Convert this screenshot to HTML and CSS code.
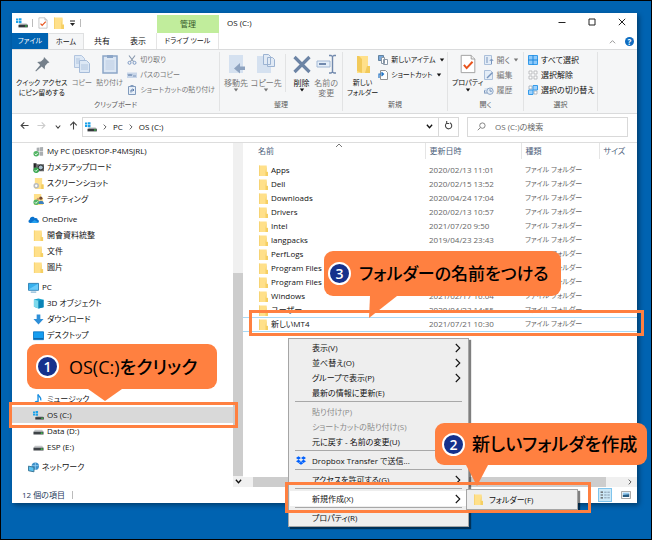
FILE: index.html
```html
<!DOCTYPE html>
<html lang="ja">
<head>
    <meta charset="utf-8">
    <title>OS (C:)</title>
    <link rel="stylesheet" href="styles.css">
</head>
<body>
    <svg class="defs" aria-hidden="true">
        <symbol id="folder" viewBox="0 0 10 12">
            <path d="M0 0.5h8.5v7H10V12H0z" fill="#ffe08a"/>
            <path d="M8.3 0.5v7.3H10V12H7.2V7.8z" fill="#f5cf63"/>
            <path d="M0 0.5h1V12H0z" fill="#f7d372"/>
        </symbol>
        <symbol id="drive" viewBox="0 0 12 8">
            <path d="M2 2h8l1.5 2.5h-11z" fill="#c4c6c8"/>
            <path d="M0.5 4.3h11v3h-11z" fill="#3f4347"/>
            <path d="M8.5 5.2h2v1.2h-2z" fill="#3fe04f"/>
        </symbol>
        <symbol id="osdrive" viewBox="0 0 12 10">
            <path d="M0 0.5h2.2v2H0zM2.8 0.2h2.7v2.3H2.8zM0 3h2.2v2H0zM2.8 3h2.7v2.3H2.8z" fill="#1ba1e9"/>
            <path d="M4 5.5h6.5L11.8 7H3z" fill="#b5b8ba"/>
            <path d="M2.5 6.8h9.3v2.6H2.5z" fill="#34383c"/>
            <path d="M9 7.5h2v1H9z" fill="#3fe04f"/>
        </symbol>
        <symbol id="right" viewBox="0 0 6 10">
            <path d="M0.8 1l4 4-4 4" fill="none" stroke="currentColor" stroke-width="1.1"/>
        </symbol>
        <symbol id="down" viewBox="0 0 8 6">
            <path d="M1 1l3 3.4L7 1" fill="none" stroke="currentColor" stroke-width="1.5"/>
        </symbol>
        <symbol id="caret" viewBox="0 0 6 4">
            <path d="M0.8 0.5h4.4L3 3.5z" fill="currentColor"/>
        </symbol>
        <symbol id="back" viewBox="0 0 10 10">
            <path d="M9.5 5H1.2M4.8 1.4L1.2 5l3.6 3.6" fill="none" stroke="currentColor" stroke-width="1.2"/>
        </symbol>
        <symbol id="check-page" viewBox="0 0 18 22">
            <path d="M1.5 1.5h11l4 4v15h-15z" fill="#fff" stroke="#9a9a9a"/>
            <path d="M12.5 1.5v4h4" fill="#eee" stroke="#9a9a9a"/>
            <path d="M4.5 12l3 3.5 6.5-7" fill="none" stroke="#e8541e" stroke-width="2.2"/>
        </symbol>
    </svg>

    <main class="window">
        <header class="titlebar">
            <div class="quick-access">
                <svg class="i12" viewBox="0 0 12 10"><use href="#osdrive"/></svg>
                <span class="bar"></span>
                <svg class="i12" viewBox="0 0 18 22"><use href="#check-page"/></svg>
                <svg class="i12"><use href="#folder"/></svg>
                <svg class="i7" viewBox="0 0 7 7"><path d="M1 1h5" stroke="#222"/><path d="M1 3h5L3.5 6z" fill="#222"/></svg>
                <span class="bar"></span>
            </div>
            <div class="context-label">管理</div>
            <div class="title">OS (C:)</div>
            <div class="window-buttons">
                <button aria-label="最小化"><svg viewBox="0 0 8 8"><path d="M0.5 4.5h7" stroke="#222"/></svg></button>
                <button aria-label="最大化"><svg viewBox="0 0 8 8"><path d="M1 1h6v6H1z" fill="none" stroke="#222"/></svg></button>
                <button aria-label="閉じる"><svg viewBox="0 0 8 8"><path d="M0.8 0.8l6.4 6.4M7.2 0.8L0.8 7.2" stroke="#222"/></svg></button>
            </div>
        </header>

        <nav class="tabs">
            <button class="tab file">ファイル</button>
            <button class="tab active">ホーム</button>
            <button class="tab">共有</button>
            <button class="tab">表示</button>
            <button class="tab tool">ドライブ ツール</button>
            <span class="tabs-end">
                <svg class="i7 grey" viewBox="0 0 8 6"><path d="M1 5l3-3 3 3" fill="none" stroke="currentColor"/></svg>
                <button class="help" aria-label="ヘルプ">?</button>
            </span>
        </nav>

        <section class="ribbon">
            <div class="group clipboard">
                <div class="tools">
                    <button class="big pin">
                        <svg viewBox="0 0 20 20"><path d="M12 3l5.5 5.5-1.8 0.6-2.7 2.8-0.3 3.6-3-3L4 17.5l-0.6-0.7L8.2 11 5.2 8l3.7-0.4 2.7-2.7z" fill="#75808b"/></svg>
                        クイック アクセス<br>にピン留めする
                    </button>
                    <button class="big off">
                        <svg viewBox="0 0 20 20"><path d="M2.500 1.500h7l3 3v9h-10z" fill="#dde8f5" stroke="#b2c5df"/><path d="M7.500 6.500h7l3 3v9h-10z" fill="#dde8f5" stroke="#a6bcd9"/><path d="M9 11h7M9 13h7M9 15h7M4 5h4M4 7h3M4 9h3" stroke="#a6bcd9" stroke-width="0.800"/></svg>
                        コピー
                    </button>
                    <button class="big off">
                        <svg viewBox="0 0 20 20"><path d="M3 2h14v17H3z" fill="#dce7f4" stroke="#8ca6c8" stroke-width="1.500"/><path d="M7 1h6v3H7z" fill="#8ca6c8"/><path d="M5.500 7h9M5.500 9h9M5.500 11h9M5.500 13h9M5.500 15h9" stroke="#b4c7df" stroke-width="0.800"/></svg>
                        貼り付け
                    </button>
                    <div class="stack">
                        <button class="small off"><svg viewBox="0 0 10 10"><path d="M2 0.500l4.500 6M8 0.500L3.500 6.500" stroke="#8798ad" stroke-width="1.100"/><circle cx="2.500" cy="7.800" r="1.500" fill="none" stroke="#7d9ac4"/><circle cx="7.500" cy="7.800" r="1.500" fill="none" stroke="#7d9ac4"/></svg>切り取り</button>
                        <button class="small off"><svg viewBox="0 0 10 10"><path d="M0 2.500h10v5.500H0z" fill="#c8d6e9"/><path d="M1 4l1 2 1-2 1 2 1-2M6 6h3" fill="none" stroke="#6885ad" stroke-width="0.800"/></svg>パスのコピー</button>
                        <button class="small off"><svg viewBox="0 0 10 10"><path d="M1.500 1.500h7v8h-7z" fill="#e7eff8" stroke="#819bbd"/><path d="M3.500 0h3v2h-3z" fill="#819bbd"/><path d="M4 7.500V5h2.500M5.500 3.800L7 5 5.500 6.200" fill="none" stroke="#4b6d9f" stroke-width="0.900"/></svg>ショートカットの貼り付け</button>
                    </div>
                </div>
                <div class="caption">クリップボード</div>
            </div>
            <div class="group organize">
                <div class="tools">
                    <button class="big off">
                        <svg viewBox="0 0 20 20"><path d="M3 1h14v18H3z" fill="#d5e1f0"/><path d="M19 12.500h-5V9l-6 5.500 6 5V16h5z" fill="#8da2bf"/></svg>
                        移動先<svg class="caret"><use href="#caret"/></svg>
                    </button>
                    <button class="big off">
                        <svg viewBox="0 0 20 20"><path d="M1 2h14v17H1z" fill="#d5e1f0"/><path d="M7.500 0.500h5l2 2v8h-7zM11.500 3.500h5l2 2v7h-7z" fill="#e1eaf5" stroke="#9cb3d2"/></svg>
                        コピー先<svg class="caret"><use href="#caret"/></svg>
                    </button>
                    <button class="big divided">
                        <svg viewBox="0 0 20 20"><path d="M2.500 3L17.500 18M17.500 3L2.500 18" stroke="#6c84a5" stroke-width="3.200"/></svg>
                        削除<svg class="caret"><use href="#caret"/></svg>
                    </button>
                    <button class="big off">
                        <svg viewBox="0 0 20 20"><path d="M1 7h13v6H1z" fill="#e5eef8" stroke="#a2b8d5"/><path d="M3 9h7v2H3z" fill="#7189ad"/><path d="M13 1.500h2l1.500 1 1.500-1h2M13 19h2l1.500-1L18 19h2M16.500 2v16" fill="none" stroke="#7189ad" stroke-width="1.400"/></svg>
                        名前の<br>変更
                    </button>
                </div>
                <div class="caption">整理</div>
            </div>
            <div class="group new">
                <div class="tools">
                    <button class="big">
                        <svg viewBox="0 0 20 20"><path d="M4 2h11v10h2v7H4z" fill="#ffe08a"/><path d="M4 2h2l3 3v14l-5-2zM14 12h3v7h-5z" fill="#f2ca5b"/></svg>
                        新しい<br>フォルダー
                    </button>
                    <div class="stack">
                        <button class="small"><svg viewBox="0 0 10 10"><path d="M0.500 0.500h5v5h-5z" fill="#78a9dc" stroke="#63829f"/><path d="M3.500 2.500h3v6h-3zM5.500 4.500h4v5h-4z" fill="#fff" stroke="#8a98a7"/></svg>新しいアイテム<svg class="caret"><use href="#caret"/></svg></button>
                        <button class="small"><svg viewBox="0 0 10 10"><path d="M2.500 0.500h5l2 2v7h-7z" fill="#fff" stroke="#929292"/><path d="M1 8V4h4M3.500 2.200L5.500 4 3.500 6" fill="none" stroke="#2475c5" stroke-width="1.200"/></svg>ショートカット<svg class="caret"><use href="#caret"/></svg></button>
                    </div>
                </div>
                <div class="caption">新規</div>
            </div>
            <div class="group open">
                <div class="tools">
                    <button class="big">
                        <svg viewBox="0 0 18 22"><use href="#check-page"/></svg>
                        プロパティ<svg class="caret"><use href="#caret"/></svg>
                    </button>
                    <div class="stack">
                        <button class="small off"><svg viewBox="0 0 10 10"><path d="M0.500 0.500h7v9h-7z" fill="#e4edf7" stroke="#acc0da"/><path d="M2 3h2M2 5h2M2 7h2" stroke="#7895bd"/><path d="M7.500 9V4M5.800 6l1.700-2 1.700 2" fill="none" stroke="#7895bd"/></svg>開く<svg class="caret"><use href="#caret"/></svg></button>
                        <button class="small off"><svg viewBox="0 0 10 10"><path d="M0.500 0.500h6l2 2v7h-8z" fill="#e4edf7" stroke="#acc0da"/><path d="M3 8l5.500-5.500" stroke="#7895bd" stroke-width="1.500"/></svg>編集</button>
                        <button class="small off"><svg viewBox="0 0 10 10"><path d="M0.500 3h6l2-2v6h-8z" fill="#dbe5f1"/><circle cx="6" cy="6.200" r="3.200" fill="#e4edf7" stroke="#8ca5c6"/><path d="M6 4.200v2h2M1 5L0 8h3" fill="none" stroke="#7895bd"/></svg>履歴</button>
                    </div>
                </div>
                <div class="caption">開く</div>
            </div>
            <div class="group select">
                <div class="tools">
                    <div class="stack">
                        <button class="small"><svg viewBox="0 0 10 10"><path d="M0.500 0.500h9v9h-9z" fill="#8fcafa" stroke="#349bea"/><path d="M5 0v10M0 5h10" stroke="#1e88dc"/></svg>すべて選択</button>
                        <button class="small"><svg viewBox="0 0 10 10"><path d="M1 1h3v3H1zM6 1h3v3H6zM1 6h3v3H1zM6 6h3v3H6z" fill="#fff" stroke="#aeb1b4" stroke-width="0.800"/></svg>選択解除</button>
                        <button class="small"><svg viewBox="0 0 10 10"><path d="M1 1h3v3H1zM6 6h3v3H6z" fill="#fff" stroke="#9faab5" stroke-width="0.800"/><path d="M5 0.500h4.500V5H5zM0.500 5H5v4.500H0.500z" fill="#9ed1fb" stroke="#349bea"/></svg>選択の切り替え</button>
                    </div>
                </div>
                <div class="caption">選択</div>
            </div>
        </section>

        <section class="address-row">
            <div class="history">
                <button aria-label="戻る"><svg class="i9"><use href="#back"/></svg></button>
                <button class="faint" aria-label="進む"><svg class="i9" viewBox="0 0 10 10"><path d="M0.500 5h8.300M5.200 1.400L8.800 5 5.200 8.600" fill="none" stroke="currentColor" stroke-width="1.200"/></svg></button>
                <button aria-label="履歴"><svg class="i5"><use href="#down"/></svg></button>
                <button aria-label="上へ"><svg class="i9" viewBox="0 0 10 10"><path d="M5 9.500V1.200M1.400 4.800L5 1.200l3.600 3.600" fill="none" stroke="currentColor" stroke-width="1.200"/></svg></button>
            </div>
            <div class="address">
                <svg class="i12" viewBox="0 0 12 10"><use href="#osdrive"/></svg>
                <svg class="i5"><use href="#right"/></svg>
                <a href="#pc">PC</a>
                <svg class="i5"><use href="#right"/></svg>
                <a href="#os">OS (C:)</a>
                <svg class="i7 end"><use href="#down"/></svg>
                <button class="refresh" aria-label="最新の情報に更新"><svg class="i9" viewBox="0 0 10 10"><path d="M6.500 2A3.500 3.500 0 1 1 3 2.400M3 0v2.700h2.700" fill="none" stroke="#444" stroke-width="1.200"/></svg></button>
            </div>
            <label class="search">
                <svg class="i9" viewBox="0 0 10 10"><circle cx="6" cy="4" r="3" fill="none" stroke="#777"/><path d="M3.800 6.200L0.800 9.200" stroke="#777"/></svg>
                <input type="text" placeholder="OS (C:)の検索" aria-label="検索">
            </label>
        </section>

        <div class="panes">
            <nav class="tree">
                <ul>
                    <li><a class="sub" href="#mypc"><svg viewBox="0 0 12 12"><path d="M4 2l3-0.500v4H4zM7.500 1.400L11 1v4.500H7.500zM4 6h3v4H4zM7.500 6H11v4.500H7.500z" fill="#aaaeb1"/><circle cx="3.500" cy="8.500" r="3" fill="#53b565"/><path d="M2 8.500l1.200 1.200 2-2.200" fill="none" stroke="#fff"/></svg>My PC (DESKTOP-P4MSJRL)</a></li>
                    <li><a class="sub" href="#camera"><svg viewBox="0 0 12 12"><path d="M0.500 1h3l1 1.500H12V10H0.500z" fill="#66686a"/><path d="M1 2h2v4H1z" fill="#222"/><circle cx="8.500" cy="6" r="2.700" fill="#a9c1cf" stroke="#222"/><circle cx="3.500" cy="9" r="3" fill="#35a64c"/><path d="M2 9l1.200 1.200 2-2.200" fill="none" stroke="#fff"/></svg>カメラアップロード</a></li>
                    <li><a class="sub" href="#shots"><svg viewBox="0 0 12 12"><path d="M2 0h8v7h1.500v5H2z" fill="#ffe08a"/><path d="M9 7h2.500v5H9z" fill="#f2ca5b"/><circle cx="3.500" cy="8.500" r="3" fill="#b8bbbd"/><circle cx="3.500" cy="8.500" r="1.300" fill="#fff"/></svg>スクリーンショット</a></li>
                    <li><a class="sub" href="#writing"><svg viewBox="0 0 12 12"><path d="M1 0h8v4h2v8H1z" fill="#ffe08a"/><circle cx="8.500" cy="4.500" r="1.800" fill="#754b33"/><path d="M5.500 11c0-5 6.500-5 6.500 0z" fill="#3d80bd"/><circle cx="5.500" cy="5.500" r="1.500" fill="#d69d70"/><circle cx="3.500" cy="9" r="3" fill="#53b565"/><path d="M2 9l1.200 1.200 2-2.200" fill="none" stroke="#fff"/></svg>ライティング</a></li>
                </ul>
                <ul>
                    <li><a href="#onedrive"><svg viewBox="0 0 12 12"><path d="M2.500 9.800C0 9.800 0 6.500 2 6 2 3.500 5.500 1.800 7.500 4.500 10 4 10.500 5.500 10.500 6.200 12.500 6.500 12.400 9.800 10 9.800z" fill="#0a72ce"/><path d="M3 9.800l4-3.300 4.500 2.800-1 0.500z" fill="#27a1ee"/></svg>OneDrive</a></li>
                    <li><a class="sub" href="#f1"><svg><use href="#folder"/></svg>開會資料統整</a></li>
                    <li><a class="sub" href="#f2"><svg><use href="#folder"/></svg>文件</a></li>
                    <li><a class="sub" href="#f3"><svg><use href="#folder"/></svg>圖片</a></li>
                </ul>
                <ul>
                    <li><a href="#pc"><svg viewBox="0 0 12 12"><path d="M0.500 1.500h11v7.500H0.500z" fill="#36b0ee" stroke="#2b7db1"/><path d="M3 10.500h6v1H3z" fill="#5a9cc4"/><path d="M1 8l10-6v6.500H1z" fill="#69cafa"/></svg>PC</a></li>
                    <li><a class="sub" href="#3d"><svg viewBox="0 0 12 12"><path d="M1 1.500L6 0.500l5.500 1.500v8L6 11.500 1 9.500z" fill="#19a5ce"/><path d="M1 1.500l5 1.500v8.500L1 9.500z" fill="#7ed9ec"/><path d="M6 3l5.500-1v8L6 11.500z" fill="#0b83b6"/></svg>3D オブジェクト</a></li>
                    <li><a class="sub" href="#dl"><svg viewBox="0 0 12 12"><path d="M4 0.500h4v5h3.500L6 11.500 0.500 5.500H4z" fill="#2e8fd8"/></svg>ダウンロード</a></li>
                    <li><a class="sub" href="#desktop"><svg viewBox="0 0 12 12"><path d="M0.500 2h11v8.500H0.500z" fill="#159df0" stroke="#0f79c6"/><path d="M1 9h10v1H1z" fill="#0b5795"/></svg>デスクトップ</a></li>
                    <li class="gap"></li>
                    <li><a class="sub" href="#music"><svg viewBox="0 0 12 12"><path d="M5.500 0.500v8" stroke="#168de0" stroke-width="1.500"/><path d="M5.500 0.500c1 3 4 3 3 6.500" fill="none" stroke="#168de0" stroke-width="1.500"/><ellipse cx="4" cy="9.300" rx="2.300" ry="2" fill="#168de0"/></svg>ミュージック</a></li>
                    <li><a class="sub current" href="#os"><svg viewBox="0 0 12 10"><use href="#osdrive"/></svg>OS (C:)</a></li>
                    <li><a class="sub" href="#data"><svg viewBox="0 0 12 8"><use href="#drive"/></svg>Data (D:)</a></li>
                    <li><a class="sub" href="#esp"><svg viewBox="0 0 12 8"><use href="#drive"/></svg>ESP (E:)</a></li>
                </ul>
                <ul>
                    <li><a href="#net"><svg viewBox="0 0 12 12"><circle cx="8" cy="4.500" r="4" fill="#3c8fc9"/><path d="M4.500 4h7M8 0.500v8" stroke="#9fd6f4" stroke-width="0.800"/><path d="M0.500 4.500l6 1.200v5l-6-1.200z" fill="#5bc2f1" stroke="#35708f"/></svg>ネットワーク</a></li>
                </ul>
            </nav>
            <div class="vscroll"><span class="track"></span><span class="thumb"></span><svg class="i7"><use href="#down"/></svg></div>

            <div class="files">
                <svg class="sort" viewBox="0 0 8 5"><path d="M1 4l3-3 3 3" fill="none" stroke="#777"/></svg>
                <table>
                    <thead>
                        <tr><th class="name">名前</th><th class="date">更新日時</th><th class="kind">種類</th><th class="size">サイズ</th></tr>
                    </thead>
                    <tbody>
                        <tr><td><svg><use href="#folder"/></svg>Apps</td><td>2020/02/13 11:01</td><td>ファイル フォルダー</td><td></td></tr>
                        <tr><td><svg><use href="#folder"/></svg>Dell</td><td>2020/02/15 13:52</td><td>ファイル フォルダー</td><td></td></tr>
                        <tr><td><svg><use href="#folder"/></svg>Downloads</td><td>2020/04/24 17:04</td><td>ファイル フォルダー</td><td></td></tr>
                        <tr><td><svg><use href="#folder"/></svg>Drivers</td><td>2020/02/13 10:57</td><td>ファイル フォルダー</td><td></td></tr>
                        <tr><td><svg><use href="#folder"/></svg>Intel</td><td>2021/07/20 9:50</td><td>ファイル フォルダー</td><td></td></tr>
                        <tr><td><svg><use href="#folder"/></svg>langpacks</td><td>2019/04/23 23:43</td><td>ファイル フォルダー</td><td></td></tr>
                        <tr><td><svg><use href="#folder"/></svg>PerfLogs</td><td></td><td>ファイル フォルダー</td><td></td></tr>
                        <tr><td><svg><use href="#folder"/></svg>Program Files</td><td></td><td>ファイル フォルダー</td><td></td></tr>
                        <tr><td><svg><use href="#folder"/></svg>Program Files (</td><td></td><td>ファイル フォルダー</td><td></td></tr>
                        <tr><td><svg><use href="#folder"/></svg>Windows</td><td>2021/02/17 16:04</td><td>ファイル フォルダー</td><td></td></tr>
                        <tr><td><svg><use href="#folder"/></svg>ユーザー</td><td>2020/04/23 14:55</td><td>ファイル フォルダー</td><td></td></tr>
                        <tr class="focused"><td><svg><use href="#folder"/></svg>新しいMT4</td><td>2021/07/21 10:30</td><td>ファイル フォルダー</td><td></td></tr>
                    </tbody>
                </table>
                <div class="hscroll">
                    <span class="thumb"></span>
                    <svg class="i5"><use href="#right"/></svg>
                </div>
            </div>
        </div>

        <footer class="status">
            <span>12 個の項目</span><span class="bar"></span>
            <button class="view on" aria-label="詳細"><svg viewBox="0 0 12 10"><path d="M0.500 1.500h3M0.500 5h3M0.500 8.500h3" stroke="#555" stroke-width="1.500"/><path d="M5 1.500h3M9 1.500h3M5 5h3M9 5h3M5 8.500h3M9 8.500h3" stroke="#789"/></svg></button>
            <button class="view" aria-label="大アイコン"><svg viewBox="0 0 12 10"><path d="M0.500 0.500h11v9H0.500z" fill="#fff" stroke="#888"/><path d="M2 2h8v3H2z" fill="#91c8ee"/><path d="M2 5l8-1v3.500H2z" fill="#285c82"/></svg></button>
        </footer>
    </main>

    <div class="menu" role="menu">
        <button>表示(V)<svg><use href="#right"/></svg></button>
        <button>並べ替え(O)<svg><use href="#right"/></svg></button>
        <button>グループで表示(P)<svg><use href="#right"/></svg></button>
        <button>最新の情報に更新(E)</button>
        <hr>
        <button disabled>貼り付け(P)</button>
        <button disabled>ショートカットの貼り付け(S)</button>
        <button>元に戻す - 名前の変更(U)</button>
        <hr>
        <button class="with-icon"><svg class="dropbox" viewBox="0 0 12 10"><path d="M3 0l3 2-3 2-3-2zM9 0l3 2-3 2-3-2zM3 4l3 2-3 2-3-2zM9 4l3 2-3 2-3-2zM6 6.600l2.800 1.700L6 10 3.200 8.300z" fill="#0061fe"/></svg>Dropbox Transfer で送信...</button>
        <hr>
        <button>アクセスを許可する(G)<svg><use href="#right"/></svg></button>
        <hr>
        <button class="open">新規作成(X)<svg><use href="#right"/></svg></button>
        <hr>
        <button>プロパティ(R)</button>
    </div>
    <div class="menu submenu" role="menu">
        <button><svg class="folder"><use href="#folder"/></svg>フォルダー(F)</button>
    </div>

    <div class="frame frame-drive"></div>
    <div class="frame frame-folder"></div>
    <div class="frame frame-menu"></div>

    <div class="callout step1">
        <span class="number">1</span>OS(C:)をクリック
        <svg class="tip" viewBox="0 0 34 12"><path d="M0 0h34L17 12z"/></svg>
    </div>
    <div class="callout step2">
        <span class="number">2</span>新しいフォルダを作成
        <svg class="tip" viewBox="0 0 22 21"><path d="M0 0h22L11 21z"/></svg>
    </div>
    <div class="callout step3">
        <span class="number">3</span>フォルダーの名前をつける
        <svg class="tip" viewBox="0 0 28 22"><path d="M1 0h27L0 22z"/></svg>
    </div>
</body>
</html>
```
FILE: styles.css
```css
* {
    box-sizing: border-box;
}

body {
    margin: 0;
    min-height: 100vh;
    position: relative;
    display: flex;
    flex-direction: column;
    padding: 12px 14px 36px 11px;
    border: 1px solid #000;
    background: #0063b1;
    color: #111;
    font: 8px/12px "Open Sans", "Noto Sans CJK JP", sans-serif;
    font-feature-settings: "palt";
    overflow: hidden;
}

button,
input {
    margin: 0;
    padding: 0;
    border: 0;
    background: none;
    color: inherit;
    font: inherit;
    font-feature-settings: inherit;
    white-space: nowrap;
}

a {
    color: inherit;
    text-decoration: none;
}

svg {
    flex: none;
}

.defs {
    position: absolute;
    width: 0;
    height: 0;
}

.i12 { width: 12px; height: 12px; }
.i9 { width: 9px; height: 9px; }
.i7 { width: 7px; height: 7px; }
.i5 { width: 6px; height: 6px; }
.grey { color: #888; }

.bar {
    width: 1px;
    height: 8px;
    background: #bbb;
}

.window {
    flex: 1;
    display: flex;
    flex-direction: column;
    background: #fff;
    box-shadow: 2px 2px 5px rgba(0, 0, 0, 0.4);
}

/* title bar */
.titlebar {
    display: flex;
    align-items: center;
    height: 20px;
}

.quick-access {
    display: flex;
    align-items: center;
    gap: 4px;
    width: 145px;
    padding: 0 4px;
}

.context-label {
    width: 62px;
    margin-top: 2px;
    line-height: 18px;
    text-align: center;
    background: #c1ed9c;
    color: #35592a;
}

.title {
    flex: 1;
    padding-left: 8px;
}

.window-buttons {
    display: flex;
}

.window-buttons button {
    width: 30px;
    height: 20px;
}

.window-buttons svg {
    width: 8px;
    height: 8px;
}

/* ribbon tabs */
.tabs {
    display: flex;
    height: 16px;
}

.tab {
    width: 36px;
    line-height: 16px;
}

.tab.file {
    background: #0063b1;
    color: #fff;
    font-size: 7px;
}

.tab.active {
    background: #f5f6f7;
    border: solid #dfe0e1;
    border-width: 1px 1px 0;
    font-size: 7px;
}

.tab.tool {
    width: 63px;
    border: solid #e5e5e5;
    border-width: 0 1px;
    font-size: 7px;
}

.tabs-end {
    display: flex;
    align-items: center;
    gap: 9px;
    margin-left: auto;
    padding-right: 3px;
}

.help {
    width: 9px;
    height: 9px;
    border-radius: 50%;
    background: #0f6cc0;
    color: #fff;
    font-weight: 700;
    line-height: 9px;
}

/* ribbon */
.ribbon {
    display: flex;
    height: 65px;
    background: #f5f6f7;
    border: solid #dadbdc;
    border-width: 1px 0;
}

.group {
    display: flex;
    flex-direction: column;
    justify-content: space-between;
    margin: 2px 0;
    border-right: 1px solid #e2e3e4;
}

.clipboard { width: 208px; }
.organize { width: 123px; }
.new { width: 105px; }
.open { width: 76px; }
.select { width: 74px; }

.tools {
    display: flex;
    align-items: flex-start;
    justify-content: space-between;
    padding: 2px 4px 0;
}

.big {
    display: flex;
    flex-direction: column;
    align-items: center;
    font-size: 7px;
    line-height: 10px;
}

.organize .big {
    font-size: 8px;
}

.big > svg {
    width: 20px;
    height: 20px;
    margin-bottom: 4px;
}

.big.divided {
    padding-left: 6px;
    border-left: 1px solid #e2e3e4;
}

.off {
    color: #777;
}

.big > .caret,
.small > .caret {
    width: 6px;
    height: 4px;
    margin: 0;
}

.stack {
    display: flex;
    flex-direction: column;
    gap: 3px;
}

.small {
    display: flex;
    align-items: center;
    gap: 3px;
}

.clipboard .small,
.new .small {
    font-size: 7px;
}

.small > svg {
    width: 10px;
    height: 10px;
}

.caption {
    color: #5a5a5a;
    font-size: 7px;
    text-align: center;
}

/* address bar */
.address-row {
    display: flex;
    align-items: center;
    height: 29px;
    padding: 0 9px 3px 8px;
    border-bottom: 1px solid #ddd;
}

.history {
    display: flex;
    justify-content: space-between;
    width: 62px;
    padding-right: 4px;
    color: #444;
}

.history .faint {
    color: #ccc;
}

.address {
    flex: 1;
    display: flex;
    align-items: center;
    gap: 5px;
    height: 20px;
    padding-left: 2px;
    border: 1px solid #d9d9d9;
}

.address .end {
    margin-left: auto;
}

.refresh {
    width: 20px;
    height: 18px;
    border-left: 1px solid #d9d9d9;
}

.search {
    display: flex;
    align-items: center;
    gap: 9px;
    width: 161px;
    height: 20px;
    margin-left: 8px;
    padding-left: 9px;
    border: 1px solid #d9d9d9;
}

.search input {
    flex: 1;
    min-width: 0;
}

.search input::placeholder {
    color: #666;
}

/* panes */
.panes {
    flex: 1;
    display: flex;
}

.tree {
    display: flex;
    flex-direction: column;
    gap: 4px;
    width: 221px;
}

.tree ul {
    margin: 0;
    padding: 0;
    list-style: none;
}

.tree .gap {
    height: 48px;
}

.tree a {
    display: flex;
    align-items: center;
    gap: 3px;
    height: 16px;
    padding-left: 16px;
}

.tree a.sub {
    padding-left: 21px;
}

.tree a.current {
    background: #d9d9d9;
}

.tree svg {
    width: 11px;
    height: 11px;
}

.vscroll {
    display: flex;
    flex-direction: column;
    align-items: center;
    width: 10px;
    background: #f0f0f0;
}

.vscroll .track {
    height: 130px;
}

.vscroll .thumb {
    flex: 1;
    width: 10px;
    background: #cdcdcd;
}

.vscroll svg {
    margin: 2px 0;
}

.files {
    flex: 1;
    display: flex;
    flex-direction: column;
    position: relative;
}

.sort {
    position: absolute;
    top: 0;
    left: 92px;
    width: 8px;
    height: 5px;
}

.files table {
    width: 100%;
    table-layout: fixed;
    border-collapse: collapse;
}

.files th {
    height: 16px;
    padding: 0 4px;
    border-right: 1px solid #e5e5e5;
    color: #4c607a;
    font-weight: 400;
    text-align: left;
}

.files th.name {
    width: 182px;
    padding-left: 15px;
}

.files th.date { width: 96px; }
.files th.kind { width: 78px; }
.files th.size { border: 0; }

.files tbody::before {
    content: "";
    display: block;
    height: 4px;
}

.files td {
    height: 14px;
    padding: 0 4px;
    line-height: 12px;
    color: #666;
    white-space: nowrap;
}

.files td:nth-child(3) {
    font-size: 7px;
}

.files td:first-child {
    padding-left: 16px;
    color: #111;
}

.files td svg {
    width: 9px;
    height: 11px;
    margin-right: 3px;
    vertical-align: middle;
}

.files .focused td {
    border: solid #a9d9f5;
    border-width: 1px 0;
}

.hscroll {
    display: flex;
    align-items: center;
    height: 10px;
    margin-top: auto;
    padding-right: 4px;
    background: #f0f0f0;
}

.hscroll .thumb {
    flex: 1;
    height: 10px;
    margin: 0 21px 0 10px;
    background: #cdcdcd;
}

/* status bar */
.status {
    display: flex;
    align-items: center;
    gap: 7px;
    height: 16px;
    padding: 0 4px 0 10px;
    color: #1e395b;
}

.view {
    display: flex;
    align-items: center;
    justify-content: center;
    width: 14px;
    height: 14px;
}

.view.on {
    margin-left: auto;
    border: 1px solid #7fc4ec;
    background: #cce8f6;
}

.view svg {
    width: 10px;
    height: 8px;
}

/* context menus */
.menu {
    position: absolute;
    top: 337px;
    left: 287px;
    width: 181px;
    padding: 1px;
    border: 1px solid #a5a5a5;
    background: #eee;
    box-shadow: 2px 2px 1px rgba(0, 0, 0, 0.5);
}

.menu button {
    display: flex;
    align-items: center;
    width: 100%;
    height: 15px;
    padding: 0 6px 0 22px;
}

.menu button:disabled {
    color: #8a8a8a;
}

.menu button.open {
    background: #fff;
}

.menu svg {
    width: 6px;
    height: 10px;
    margin-left: auto;
}

.menu button.with-icon {
    gap: 6px;
    padding-left: 6px;
}

.menu .dropbox {
    width: 10px;
    height: 9px;
    margin: 0;
}

.menu hr {
    margin: 1px 5px 2px;
    border: 0;
    border-top: 1px solid #a8a8a8;
}

.submenu {
    top: 488px;
    left: 465px;
    width: 112px;
}

.submenu button {
    height: 17px;
    gap: 6px;
    padding-left: 6px;
}

.submenu .folder {
    width: 9px;
    height: 11px;
    margin: 0;
}

/* orange highlights */
.frame {
    position: absolute;
    border: 3px solid #ff8040;
}

.frame-drive {
    top: 401px;
    left: 8px;
    width: 229px;
    height: 26px;
}

.frame-folder {
    top: 309px;
    left: 248px;
    width: 395px;
    height: 26px;
}

.frame-menu {
    top: 481px;
    left: 284px;
    width: 306px;
    height: 31px;
}

.callout {
    position: absolute;
    display: flex;
    align-items: center;
    height: 45px;
    border-radius: 9px;
    background: #ff8040;
    color: #000;
    font-size: 18px;
    font-weight: 500;
    line-height: 24px;
    white-space: nowrap;
}

.number {
    width: 23px;
    height: 23px;
    border: 2px solid #fff;
    border-radius: 50%;
    background: #15318c;
    color: #fff;
    font-size: 14px;
    font-weight: 600;
    line-height: 19px;
    text-align: center;
}

.tip {
    position: absolute;
    top: 100%;
    fill: #ff8040;
}

.step1 {
    top: 343px;
    left: 26px;
    width: 190px;
    padding-left: 9px;
    gap: 10px;
}

.step1 .tip {
    left: 61px;
    width: 34px;
    height: 12px;
}

.step2 {
    top: 422px;
    left: 434px;
    width: 212px;
    height: 42px;
    padding-left: 7px;
    gap: 7px;
}

.step2 .tip {
    left: 31px;
    width: 22px;
    height: 21px;
}

.step3 {
    top: 250px;
    left: 323px;
    width: 237px;
    padding-left: 4px;
    gap: 8px;
    font-size: 17px;
}

.step3 .tip {
    left: 45px;
    width: 28px;
    height: 22px;
}
```
